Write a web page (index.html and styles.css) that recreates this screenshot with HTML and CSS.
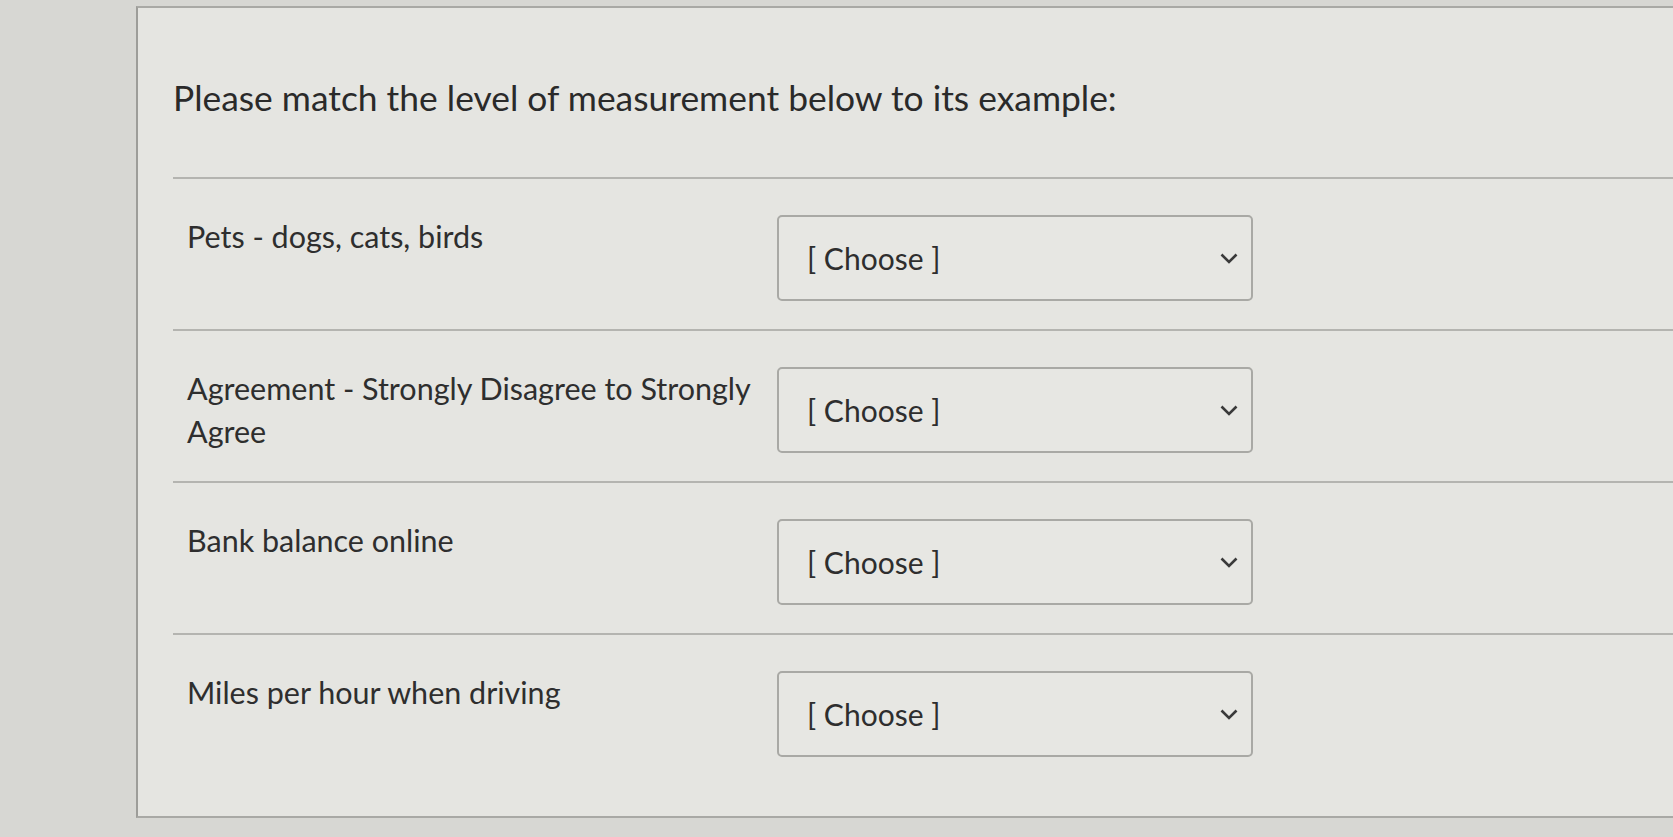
FILE: index.html
```html
<!DOCTYPE html>
<html>
<head>
<meta charset="utf-8">
<link rel="stylesheet" href="styles.css">
</head>
<body>
<div class="page">
  <div class="card">
    <h1 class="title">Please match the level of measurement below to its example:</h1>
    <div class="rows">
      <div class="row">
        <div class="label">Pets - dogs, cats, birds</div>
        <div class="select"><span>[ Choose ]</span><svg class="chev" width="20" height="13" viewBox="0 0 20 13"><path d="M2.5 2.5 L10 10 L17.5 2.5" fill="none" stroke="#3a3a3a" stroke-width="2.6"/></svg></div>
      </div>
      <div class="row">
        <div class="label">Agreement - Strongly Disagree to Strongly Agree</div>
        <div class="select"><span>[ Choose ]</span><svg class="chev" width="20" height="13" viewBox="0 0 20 13"><path d="M2.5 2.5 L10 10 L17.5 2.5" fill="none" stroke="#3a3a3a" stroke-width="2.6"/></svg></div>
      </div>
      <div class="row">
        <div class="label">Bank balance online</div>
        <div class="select"><span>[ Choose ]</span><svg class="chev" width="20" height="13" viewBox="0 0 20 13"><path d="M2.5 2.5 L10 10 L17.5 2.5" fill="none" stroke="#3a3a3a" stroke-width="2.6"/></svg></div>
      </div>
      <div class="row">
        <div class="label">Miles per hour when driving</div>
        <div class="select"><span>[ Choose ]</span><svg class="chev" width="20" height="13" viewBox="0 0 20 13"><path d="M2.5 2.5 L10 10 L17.5 2.5" fill="none" stroke="#3a3a3a" stroke-width="2.6"/></svg></div>
      </div>
    </div>
  </div>
</div>
</body>
</html>
```
FILE: styles.css
```css
html, body {
  margin: 0;
  padding: 0;
  height: 100%;
  background: #d7d7d3;
  font-family: Lato, "Open Sans", sans-serif;
  color: #2e2e2e;
  overflow: hidden;
}
.page {
  height: 837px;
  padding-left: 136px;
  padding-top: 6px;
  box-sizing: border-box;
}
.card {
  background: #e5e5e1;
  border-left: 2px solid #9d9d99;
  border-top: 2px solid #a9a9a5;
  height: 812px;
  border-bottom: 2px solid #a9a9a5;
  box-sizing: border-box;
  padding-left: 35px;
}
.title {
  margin: 0;
  padding-top: 69px;
  padding-bottom: 58px;
  font-size: 35.4px;
  line-height: 42px;
  font-weight: 400;
  color: #2a2a2a;
  letter-spacing: 0;
}
.rows {
  display: flex;
  flex-direction: column;
}
.row {
  display: flex;
  align-items: flex-start;
  border-top: 2px solid #b4b4b0;
  padding: 36px 0 26px 14px;
  height: 152px;
  box-sizing: border-box;
}
.label {
  width: 590px;
  font-size: 30.5px;
  line-height: 43px;
  color: #2e2e2e;
  padding-top: 0;
}
.select {
  width: 476px;
  height: 86px;
  box-sizing: border-box;
  border: 2px solid #a9a9a5;
  border-radius: 5px;
  background: #e7e7e3;
  display: flex;
  align-items: center;
  justify-content: space-between;
  padding: 0 12px 0 28px;
  font-size: 30px;
  color: #2e2e2e;
}
.chev {
  display: block;
}
```
